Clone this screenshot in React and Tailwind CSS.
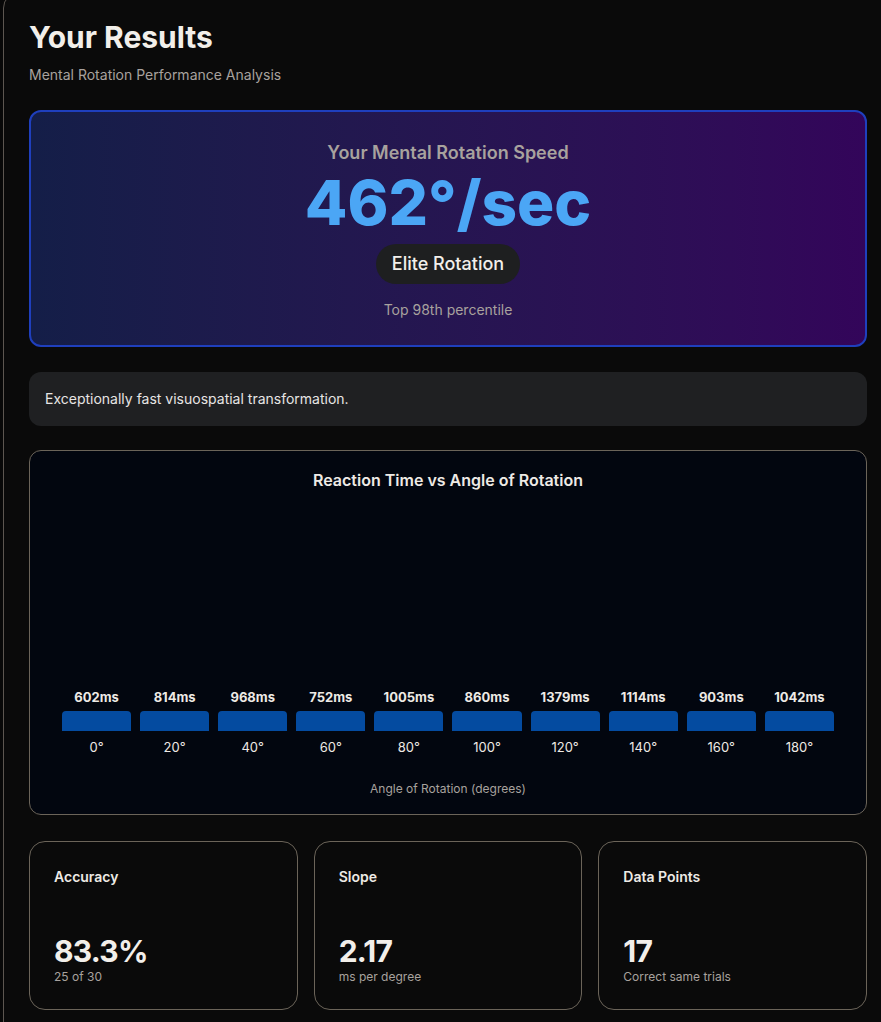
const bars = [
  { ms: 602, deg: 0 },
  { ms: 814, deg: 20 },
  { ms: 968, deg: 40 },
  { ms: 752, deg: 60 },
  { ms: 1005, deg: 80 },
  { ms: 860, deg: 100 },
  { ms: 1379, deg: 120 },
  { ms: 1114, deg: 140 },
  { ms: 903, deg: 160 },
  { ms: 1042, deg: 180 },
];

const stats = [
  { label: 'Accuracy', value: '83.3%', sub: '25 of 30' },
  { label: 'Slope', value: '2.17', sub: 'ms per degree' },
  { label: 'Data Points', value: '17', sub: 'Correct same trials' },
];

function StatCard({ label, value, sub }) {
  return (
    <div className="flex h-[169px] flex-col justify-between rounded-2xl border border-[#6b6459] px-6 pb-6 pt-[25px]">
      <div className="text-sm font-semibold text-[#eeeae5]">{label}</div>
      <div>
        <div className="text-3xl font-bold leading-9 tracking-tight text-[#f2efea]">{value}</div>
        <div className="text-xs text-[#a8a29e]">{sub}</div>
      </div>
    </div>
  );
}

function ReactionChart() {
  return (
    <div className="mt-6 rounded-xl border border-[#6b6459] bg-[#02060f] px-8 pb-[17px] pt-[17px]">
      <h3 className="text-center text-base font-semibold leading-6 text-[#eeeae5]">
        Reaction Time vs Angle of Rotation
      </h3>
      <div className="flex h-[263px] items-end gap-[9px]">
        {bars.map((b) => (
          <div key={b.deg} className="flex flex-1 flex-col items-center">
            <span className="text-[13px] font-bold leading-4 text-[#eeeae5]">{b.ms}ms</span>
            <div className="mt-[6px] h-5 w-full rounded-t bg-[#044ba0]" />
            <span className="mt-2 text-[13px] leading-4 text-[#eeeae5]">{b.deg}°</span>
          </div>
        ))}
      </div>
      <p className="mt-[26px] text-center text-xs leading-4 text-[#a8a29e]">
        Angle of Rotation (degrees)
      </p>
    </div>
  );
}

export default function App() {
  return (
    <div
      className="min-h-screen w-full overflow-hidden bg-[#080808] pl-[3px]"
      style={{ fontFamily: 'Inter, "Noto Sans", sans-serif' }}
    >
      <div className="-mt-2 w-[890px] rounded-2xl border border-[#5c5650] bg-[#0a0a0a] px-[25px] pb-10 pt-[26px]">
        <h1 className="text-3xl font-bold leading-9 text-[#f2efea]">Your Results</h1>
        <p className="mt-[10px] text-sm text-[#a8a29e]">Mental Rotation Performance Analysis</p>

        {/* hero */}
        <div className="mt-[25px] flex flex-col items-center rounded-xl border-2 border-[#1f3fbd] bg-linear-to-r from-[#141e48] to-[#33055a] pb-[25px] pt-[27px]">
          <div className="text-lg font-semibold text-[#a8a29e]">Your Mental Rotation Speed</div>
          <div className="mt-[5px] text-[62px] font-extrabold leading-none text-[#4ba6f5]">462°/sec</div>
          <div className="mt-[10px] rounded-full bg-[#1e1f20] px-4 py-1.5 text-lg font-medium text-[#f2efea]">
            Elite Rotation
          </div>
          <div className="mt-4 text-sm text-[#a8a29e]">Top 98th percentile</div>
        </div>

        <div className="mt-[25px] rounded-xl bg-[#1f2022] px-4 py-[17px] text-sm text-[#e7e5e4]">
          Exceptionally fast visuospatial transformation.
        </div>

        <ReactionChart />

        <div className="mt-[26px] grid grid-cols-3 gap-4">
          {stats.map((s) => (
            <StatCard key={s.label} {...s} />
          ))}
        </div>
      </div>
    </div>
  );
}
